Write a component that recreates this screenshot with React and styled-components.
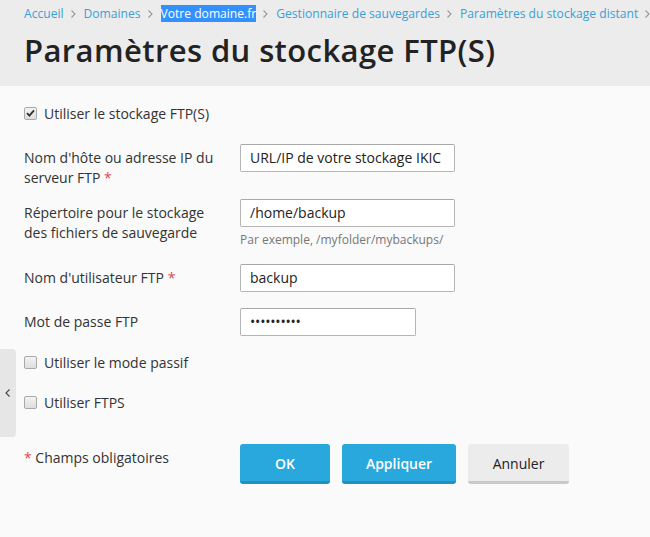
import React from "react";
import styled, { createGlobalStyle } from "styled-components";

const Global = createGlobalStyle`
  html, body { margin: 0; padding: 0; }
  body {
    background: #fafafa;
    font-family: "Open Sans", "Noto Sans", sans-serif;
    color: #333;
    width: 650px;
    height: 537px;
    overflow: hidden;
  }
`;

const Page = styled.div`
  position: relative;
  width: 650px;
  height: 537px;
  background: #fafafa;
`;

const Header = styled.header`
  background: #ececec;
  height: 86px;
  padding: 5px 0 0 24px;
  box-sizing: border-box;
`;

const Crumbs = styled.nav`
  display: flex;
  align-items: center;
  font-size: 12.1px;
  line-height: 17px;
  white-space: nowrap;
`;

const Crumb = styled.span`
  color: ${p => (p.$selected ? "#fff" : "#3a9fd8")};
  background: ${p => (p.$selected ? "#3390ff" : "transparent")};
`;

const Sep = styled.span`
  margin: 0 7px 0 5px;
  display: inline-flex;
  align-items: center;
`;

const Title = styled.h1`
  margin: 8px 0 0 0;
  font-size: 31px;
  line-height: 41px;
  font-weight: 600;
  color: #222;
  letter-spacing: 0.4px;
`;

const Content = styled.main`
  padding: 17px 0 0 24px;
`;

const CheckRow = styled.label`
  display: flex;
  align-items: center;
  height: 20px;
  font-size: 14px;
  color: #333;
  margin-top: ${p => p.$mt || 0}px;
`;

const Box = styled.span`
  width: 11px;
  height: 11px;
  border: 1px solid #a9a9a9;
  border-radius: 2px;
  background: linear-gradient(#f3f3f3, #dedede);
  margin-right: 7px;
  display: inline-flex;
  align-items: center;
  justify-content: center;
  flex: none;
`;

const Row = styled.div`
  display: grid;
  grid-template-columns: 216px auto;
  align-items: start;
  margin-top: ${p => p.$mt || 0}px;
`;

const Label = styled.div`
  padding-top: 4px;
  font-size: 14px;
  line-height: 20px;
  color: #333;
  width: 200px;
`;

const Req = styled.span`
  color: #e2474b;
`;

const Field = styled.div`
  display: flex;
  flex-direction: column;
`;

const Input = styled.div`
  box-sizing: border-box;
  width: ${p => p.$w}px;
  height: 28px;
  border: 1px solid #b5b5b5;
  border-top-color: #a8a8a8;
  border-radius: 2px;
  background: #fff;
  padding: 0 9px;
  font-size: 14px;
  line-height: 26px;
  color: #222;
  white-space: nowrap;
  overflow: hidden;
`;

const Dots = styled.span`
  font-size: 14px;
  letter-spacing: -0.2px;
  color: #222;
`;

const Hint = styled.div`
  margin-top: 4px;
  font-size: 12px;
  line-height: 18px;
  color: #777;
`;

const Footer = styled.div`
  display: grid;
  grid-template-columns: 216px auto;
  margin-top: 32px;
`;

const Note = styled.div`
  font-size: 14px;
  line-height: 20px;
  padding-top: 4px;
  color: #333;
`;

const Buttons = styled.div`
  display: flex;
  gap: 12px;
`;

const Button = styled.button`
  box-sizing: border-box;
  width: ${p => p.$w}px;
  height: 40px;
  border: none;
  border-bottom: 3px solid ${p => (p.$primary ? "#2190be" : "#c9c9c9")};
  border-radius: 3px;
  background: ${p => (p.$primary ? "#29a8de" : "#ececec")};
  color: ${p => (p.$primary ? "#fff" : "#222")};
  font-family: "Open Sans", "Noto Sans", sans-serif;
  font-size: 14px;
  font-weight: ${p => (p.$primary ? 600 : 400)};
  padding: 2px 0 0 0;
`;

const SideTab = styled.div`
  position: absolute;
  left: 0;
  top: 349px;
  width: 16px;
  height: 88px;
  background: #e6e6e6;
  border-radius: 0 4px 4px 0;
  display: flex;
  align-items: center;
  justify-content: center;
`;

const ChevronRight = ({ color = "#999" }) => (
  <svg width="8" height="10" viewBox="0 0 8 10" fill="none">
    <path d="M2.5 1.5 L6 5 L2.5 8.5" stroke={color} strokeWidth="1.1" />
  </svg>
);

const ChevronLeft = ({ color = "#444" }) => (
  <svg width="8" height="10" viewBox="0 0 8 10" fill="none">
    <path d="M5.5 1.5 L2 5 L5.5 8.5" stroke={color} strokeWidth="1.1" />
  </svg>
);

const Check = () => (
  <svg width="9" height="8" viewBox="0 0 9 8">
    <path d="M1 4.2 L3.4 6.6 L8 1.4" stroke="#333" strokeWidth="1.9" fill="none" />
  </svg>
);

export default function App() {
  const crumbs = [
    "Accueil",
    "Domaines",
    "Votre domaine.fr",
    "Gestionnaire de sauvegardes",
    "Paramètres du stockage distant",
  ];
  return (
    <Page>
      <Global />
      <Header>
        <Crumbs>
          {crumbs.map((c, i) => (
            <React.Fragment key={c}>
              <Crumb $selected={i === 2}>{c}</Crumb>
              <Sep>
                <ChevronRight />
              </Sep>
            </React.Fragment>
          ))}
        </Crumbs>
        <Title>Paramètres du stockage FTP(S)</Title>
      </Header>
      <Content>
        <CheckRow>
          <Box>
            <Check />
          </Box>
          Utiliser le stockage FTP(S)
        </CheckRow>

        <Row $mt={21}>
          <Label>
            Nom d'hôte ou adresse IP du serveur FTP <Req>*</Req>
          </Label>
          <Field>
            <Input $w={215}>URL/IP de votre stockage IKIC</Input>
          </Field>
        </Row>

        <Row $mt={11}>
          <Label>Répertoire pour le stockage des fichiers de sauvegarde</Label>
          <Field>
            <Input $w={215}>/home/backup</Input>
            <Hint>Par exemple, /myfolder/mybackups/</Hint>
          </Field>
        </Row>

        <Row $mt={15}>
          <Label>
            Nom d'utilisateur FTP <Req>*</Req>
          </Label>
          <Field>
            <Input $w={215}>backup</Input>
          </Field>
        </Row>

        <Row $mt={16}>
          <Label>Mot de passe FTP</Label>
          <Field>
            <Input $w={176}>
              <Dots>••••••••••</Dots>
            </Input>
          </Field>
        </Row>

        <CheckRow $mt={16}>
          <Box />
          Utiliser le mode passif
        </CheckRow>
        <CheckRow $mt={20}>
          <Box />
          Utiliser FTPS
        </CheckRow>

        <Footer>
          <Note>
            <Req>*</Req> Champs obligatoires
          </Note>
          <Buttons>
            <Button $primary $w={90}>OK</Button>
            <Button $primary $w={114}>Appliquer</Button>
            <Button $w={101}>Annuler</Button>
          </Buttons>
        </Footer>
      </Content>
      <SideTab>
        <ChevronLeft />
      </SideTab>
    </Page>
  );
}
